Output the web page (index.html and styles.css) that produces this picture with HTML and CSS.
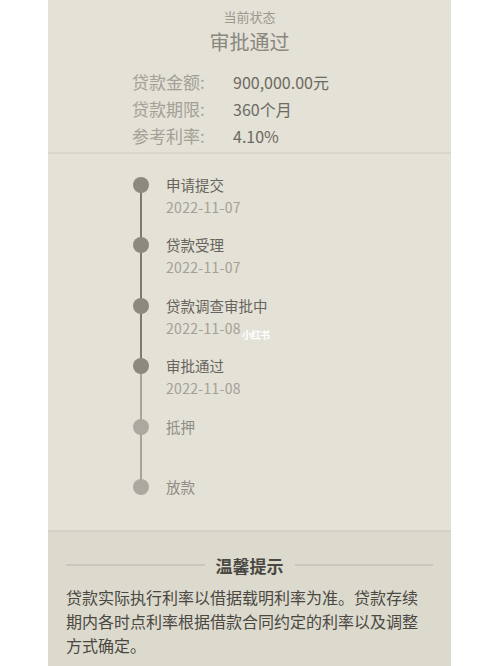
FILE: index.html
```html
<!DOCTYPE html>
<html lang="zh-CN">
<head>
<meta charset="utf-8">
<link rel="stylesheet" href="styles.css">
</head>
<body>
<div class="card">
  <section class="summary">
    <div class="status-label">当前状态</div>
    <div class="status-title">审批通过</div>
    <div class="info">
      <div class="info-row"><span class="info-key">贷款金额:</span><span class="info-val">900,000.00元</span></div>
      <div class="info-row"><span class="info-key">贷款期限:</span><span class="info-val">360个月</span></div>
      <div class="info-row"><span class="info-key">参考利率:</span><span class="info-val">4.10%</span></div>
    </div>
  </section>
  <section class="timeline">
    <div class="step done seg-dark">
      <span class="dot"></span>
      <div class="step-title">申请提交</div>
      <div class="step-date">2022-11-07</div>
    </div>
    <div class="step done seg-dark">
      <span class="dot"></span>
      <div class="step-title">贷款受理</div>
      <div class="step-date">2022-11-07</div>
    </div>
    <div class="step done seg-dark">
      <span class="dot"></span>
      <div class="step-title">贷款调查审批中</div>
      <div class="step-date">2022-11-08</div>
    </div>
    <div class="step done seg-light">
      <span class="dot"></span>
      <div class="step-title">审批通过</div>
      <div class="step-date">2022-11-08</div>
    </div>
    <div class="step todo seg-light">
      <span class="dot"></span>
      <div class="step-title">抵押</div>
    </div>
    <div class="step todo last">
      <span class="dot"></span>
      <div class="step-title">放款</div>
    </div>
    <span class="watermark">小红书</span>
  </section>
  <section class="tips">
    <div class="tips-head"><span class="rule"></span><span class="tips-title">温馨提示</span><span class="rule"></span></div>
    <p class="tips-text">贷款实际执行利率以借据载明利率为准。贷款存续期内各时点利率根据借款合同约定的利率以及调整方式确定。</p>
  </section>
</div>
</body>
</html>
```
FILE: styles.css
```css
html, body {
  margin: 0;
  padding: 0;
  background: #ffffff;
}
body {
  font-family: "Noto Sans CJK SC", "Noto Sans", sans-serif;
  width: 500px;
  height: 666px;
  overflow: hidden;
}
.card {
  margin-left: 48px;
  width: 403px;
  height: 666px;
  background: #e4e1d6;
  display: flex;
  flex-direction: column;
}
.summary {
  height: 152px;
  border-bottom: 2px solid #d8d5ca;
  display: flex;
  flex-direction: column;
  align-items: center;
}
.status-label {
  margin-top: 7px;
  font-size: 13px;
  line-height: 20px;
  color: #9c998f;
}
.status-title {
  margin-top: 1px;
  font-size: 20px;
  line-height: 28px;
  color: #8a877e;
}
.info {
  align-self: stretch;
  padding-left: 84px;
  margin-top: 12px;
}
.info-row {
  display: flex;
  height: 27px;
  align-items: center;
}
.info-key {
  width: 101px;
  font-size: 17px;
  color: #a3a096;
}
.info-val {
  font-size: 16px;
  color: #6d6a63;
}
.timeline {
  position: relative;
  height: 376px;
  padding-top: 20px;
  box-sizing: border-box;
}
.step {
  position: relative;
  height: 60.4px;
  padding-left: 118px;
  box-sizing: border-box;
}
.dot {
  position: absolute;
  left: 85px;
  top: 3px;
  width: 16px;
  height: 16px;
  border-radius: 50%;
  background: #8c897f;
  z-index: 1;
}
.todo .dot {
  background: #aba89f;
}
.step::before {
  content: "";
  position: absolute;
  left: 92px;
  top: 11px;
  width: 2px;
  height: 61px;
}
.seg-dark::before { background: #7c7970; }
.seg-light::before { background: #a6a39a; }
.last::before { display: none; }
.step-title {
  font-size: 14.5px;
  line-height: 22px;
  color: #67645d;
}
.todo .step-title {
  color: #8f8c84;
}
.step-date {
  font-size: 14px;
  line-height: 22px;
  letter-spacing: 0.3px;
  color: #a3a097;
}
.watermark {
  position: absolute;
  left: 194px;
  top: 173px;
  font-size: 10px;
  font-weight: bold;
  color: #ffffff;
  letter-spacing: -1px;
}
.tips {
  flex: 1;
  background: #dcd9cd;
  border-top: 2px solid #d3d0c4;
  padding: 21px 18px 0;
}
.tips-head {
  display: flex;
  align-items: center;
  height: 24px;
}
.rule {
  flex: 1;
  height: 2px;
  background: #cac7bc;
}
.tips-title {
  padding: 0 11px;
  font-size: 17px;
  font-weight: bold;
  color: #4a4843;
}
.tips-text {
  margin: 8px 0 0;
  width: 360px;
  font-size: 16px;
  line-height: 24px;
  color: #4a4843;
}
```
